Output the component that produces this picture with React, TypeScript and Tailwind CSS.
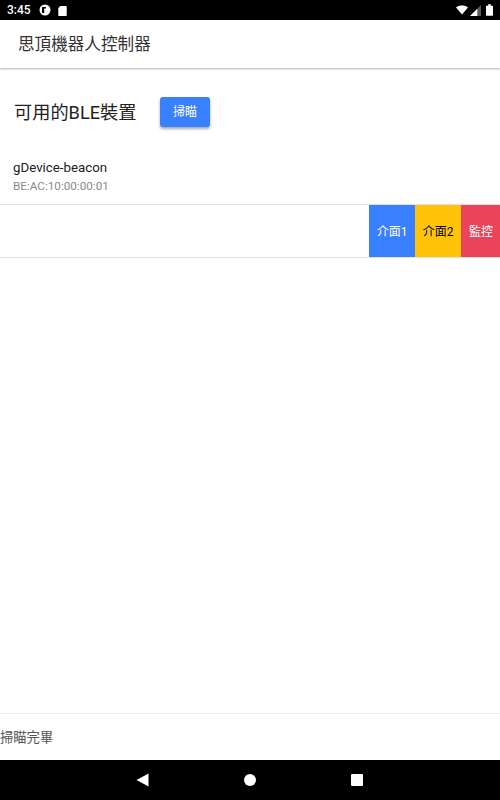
const font = "font-['Roboto','Noto_Sans_CJK_TC',sans-serif]";

const StatusBar = () => (
  <div className="flex h-5 shrink-0 items-center bg-black pl-[7px] pr-[7px] text-white">
    <span className="text-[12px] font-medium leading-none">3:45</span>
    {/* notification icons */}
    <svg width="12" height="12" viewBox="0 0 12 12" className="ml-[8px]">
      <circle cx="6" cy="6" r="5.500" fill="#fff" />
      <path d="M3 3h2.200v6H3zM5.200 3H7v1.500H5.200z" fill="#000" />
    </svg>
    <svg width="9" height="11" viewBox="0 0 10 12" className="ml-[7px]">
      <path d="M2.500 1H9a.7.7 0 0 1 .7.7v9.600a.7.7 0 0 1-.7.7H1a.7.7 0 0 1-.7-.7V3.400z" fill="#fff" />
    </svg>
    <div className="ml-auto flex items-center gap-[2px]">
      <svg width="12" height="10" viewBox="0 0 16 12">
        <path d="M0 2.600C2.200.9 5 0 8 0s5.800.9 8 2.600L8 12z" fill="#fff" />
      </svg>
      <svg width="11" height="11" viewBox="0 0 12 12">
        <path d="M12 0v12H0z" fill="#fff" fillOpacity="0.35" />
        <path d="M8 4v8H0z" fill="#fff" />
      </svg>
      <svg width="7" height="12" viewBox="0 0 8 13" className="ml-[3px]">
        <path d="M2.500 0h3v1.500h1.800a.7.7 0 0 1 .7.7v10.100a.7.7 0 0 1-.7.7H.7a.7.7 0 0 1-.7-.7V2.200a.7.7 0 0 1 .7-.7h1.800z" fill="#fff" />
      </svg>
    </div>
  </div>
);

const NavBar = () => (
  <div className="flex h-10 shrink-0 items-center justify-center bg-black">
    <svg width="13" height="14" viewBox="0 0 13 14" className="mr-[95px] -translate-x-[1px]">
      <path d="M0.500 7l12-6.500v13z" fill="#fff" />
    </svg>
    <div className="mr-[94px] h-3 w-3 -translate-x-[1px] rounded-full bg-white" />
    <div className="h-3 w-3 rounded-[1px] bg-white" />
  </div>
);

export default function App() {
  return (
    <div className={`${font} flex h-[800px] w-[500px] flex-col overflow-hidden bg-white`}>
      <StatusBar />

      {/* app bar */}
      <div className="flex h-12 shrink-0 items-center bg-white pl-[18px] pt-[2px] text-[16.600px] text-[#333333] shadow-[0_1px_2px_rgba(0,0,0,0.3)]">
        思頂機器人控制器
      </div>

      <div className="flex min-h-0 flex-1 flex-col">
        <div className="flex items-center pl-[14px] pt-7">
          <h1 className="h-8 w-[146px] text-[18.200px] leading-[34px] text-[#212121]">可用的BLE裝置</h1>
          <button className="h-[30px] w-[50px] rounded-[3px] bg-[#3880ff] text-[12px] text-white shadow-[0_2px_3px_rgba(0,0,0,0.35)]">
            掃瞄
          </button>
        </div>

        <div className="pl-[13px] pt-[31px]">
          <div className="text-[13.300px] leading-[18px] text-[#212121]">gDevice-beacon</div>
          <div className="mt-[1px] text-[11.700px] leading-[16px] text-[#8a8a8a]">BE:AC:10:00:00:01</div>
        </div>

        {/* swipe row with options open */}
        <div className="mt-[10px] flex h-[54px] justify-end border-y border-[#dedede]">
          <button className="w-[46px] bg-[#3880ff] pt-[2px] text-[12px] text-white">介面1</button>
          <button className="w-[46px] bg-[#ffc409] pt-[2px] text-[12px] text-black">介面2</button>
          <button className="w-[39px] bg-[#eb445a] pl-[1px] pt-[2px] text-[12px] text-white">監控</button>
        </div>

        <div className="mt-auto flex h-[47px] items-center border-t border-[#ececec] pt-[2px] text-[13.300px] text-[#555555]">
          掃瞄完畢
        </div>
      </div>

      <NavBar />
    </div>
  );
}
